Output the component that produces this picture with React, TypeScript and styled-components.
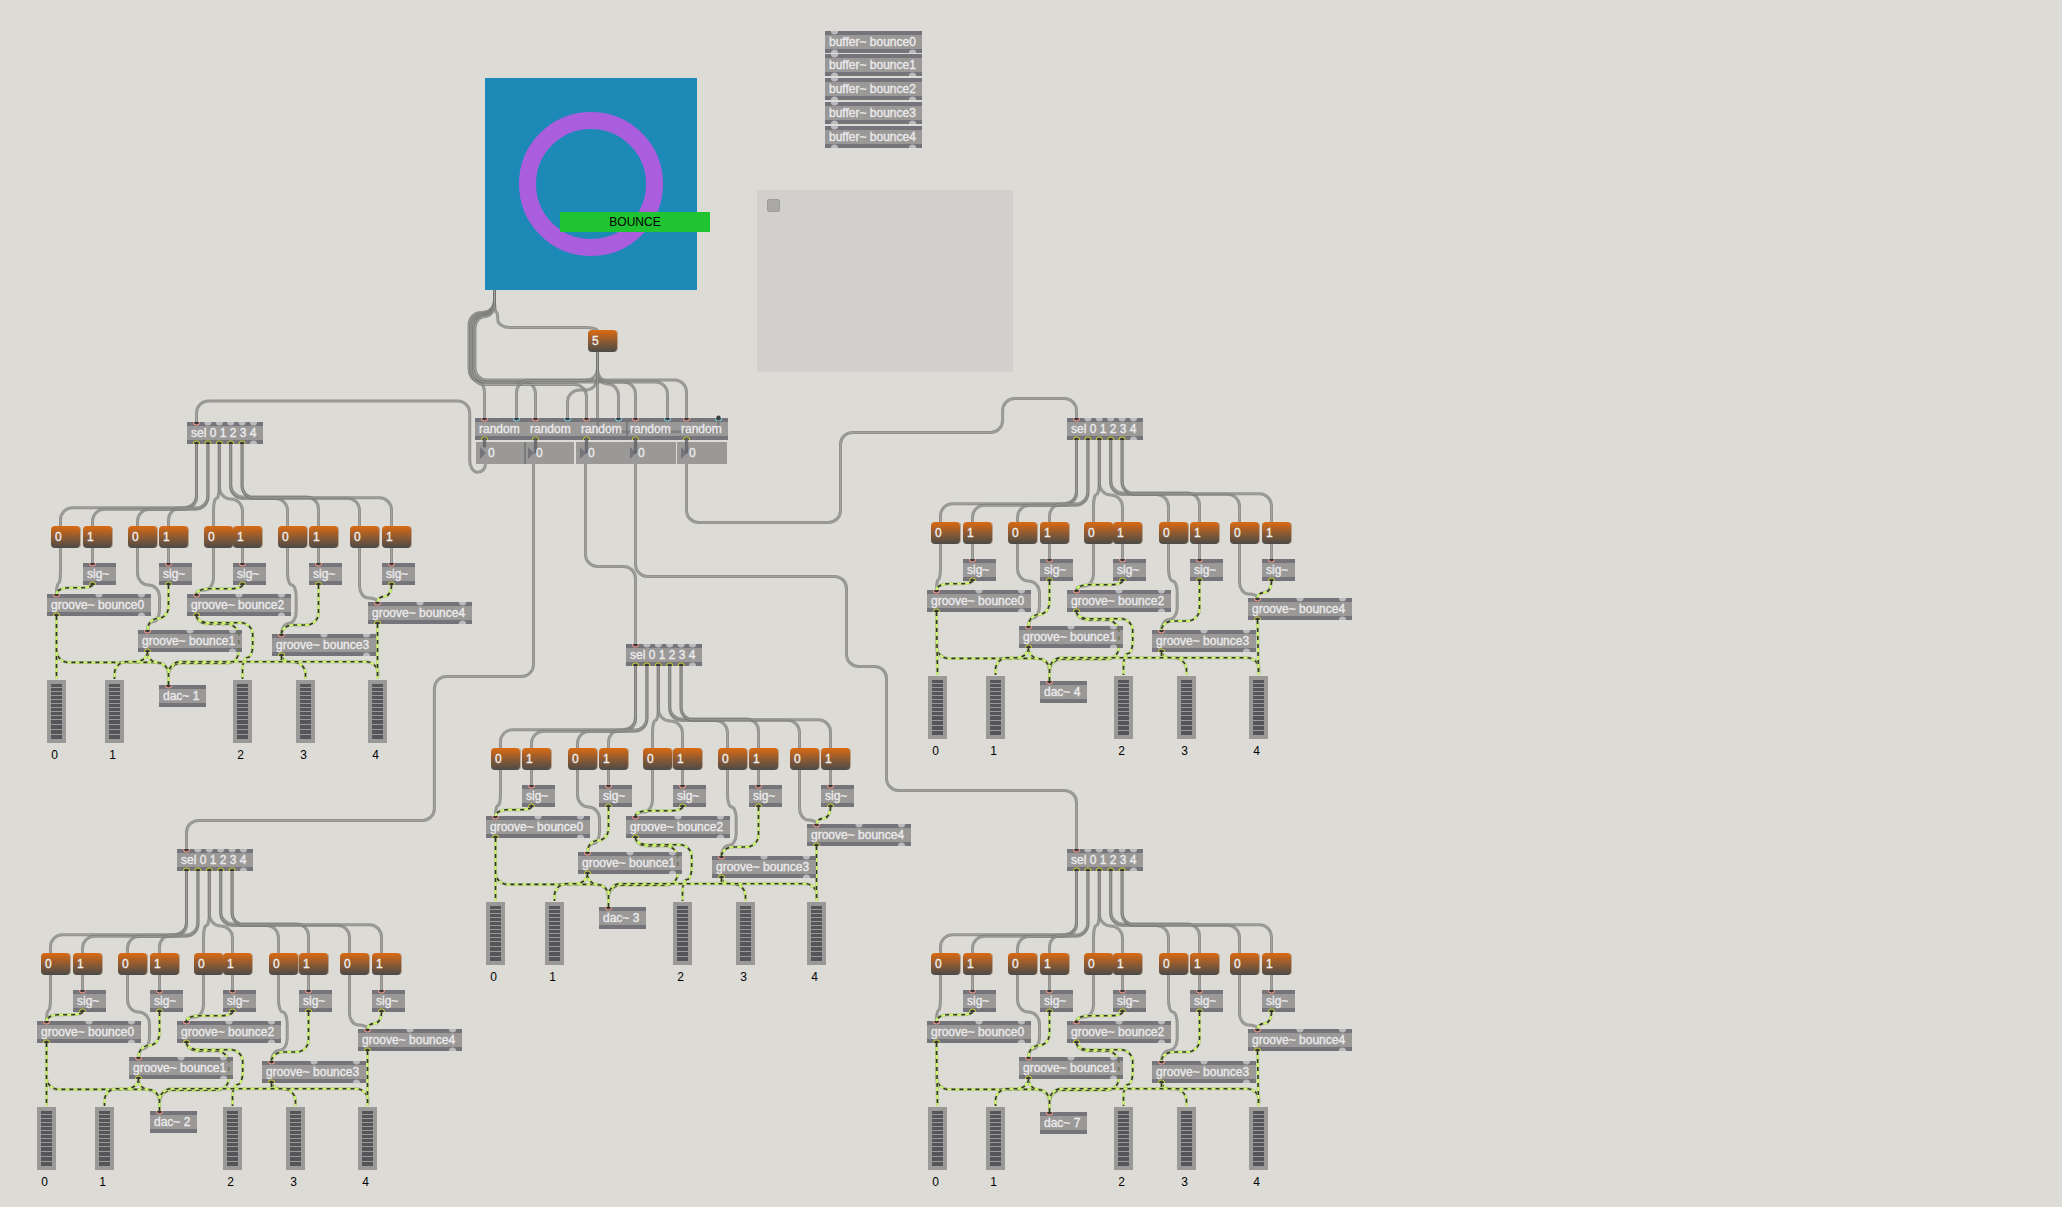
import React from "react";
import styled, { createGlobalStyle } from "styled-components";

const GlobalStyle = createGlobalStyle`
  html, body { margin: 0; padding: 0; background: #dcdbd6; }
  body { overflow: hidden; }
`;

const Patcher = styled.main`
  position: relative;
  isolation: isolate;
  width: 2062px;
  height: 1207px;
  overflow: hidden;
  background: #dcdbd6;
  font-family: "Liberation Sans", Arial, sans-serif;
  font-size: 12px;
  line-height: 22px;
  white-space: pre;
`;

const Cords = styled.svg<{ $over?: boolean }>`
  position: absolute;
  inset: 0;
  z-index: ${(p) => (p.$over ? 1 : "auto")};
  width: 2062px;
  height: 1207px;
  fill: none;
  pointer-events: none;
`;

/* A node's place on the free patcher canvas. */
const Node = styled.div<{ $x: number; $y: number }>`
  position: absolute;
  left: ${(p) => p.$x}px;
  top: ${(p) => p.$y}px;
`;

const Box = styled.div<{ $w: number }>`
  position: relative;
  width: ${(p) => p.$w}px;
  height: 22px;
  box-sizing: border-box;
  padding-left: 4px;
  color: #ebebee;
  background: linear-gradient(#74747a 4px, #9b9997 4px, #9b9997 18px, #74747a 18px);
`;

const Ports = styled.svg`
  position: absolute;
  left: 0;
  top: 0;
  width: 100%;
  height: 22px;
  overflow: hidden;
`;

const BoxText = styled.span`
  position: relative;
  z-index: 2;
  -webkit-text-stroke: 0.35px #ebebee;
`;

const BufferStack = styled.div`
  display: grid;
  grid-template-rows: 23px repeat(4, 24px);
`;

const RandomRow = styled.div`
  display: flex;
`;

const NumberRow = styled.div`
  display: grid;
  grid-template-columns: 48px 52px 50px 51px 50px;
`;

const Message = styled.div`
  width: 29px;
  height: 22px;
  box-sizing: border-box;
  padding-left: 4px;
  border-radius: 4px;
  color: #efefef;
  -webkit-text-stroke: 0.35px #efefef;
  background: linear-gradient(#dc6a12, #8f5a31 50%, #4b4b49);
  box-shadow: 1px 0 0 #b7a38f;
`;

const NumberBox = styled.div`
  position: relative;
  width: 50px;
  height: 22px;
  box-sizing: border-box;
  padding-left: 12px;
  color: #ebebee;
  background: #9b9997;
  &::before {
    content: "";
    position: absolute;
    left: 4px;
    top: 5px;
    border-left: 6px solid #74747a;
    border-top: 6px solid transparent;
    border-bottom: 6px solid transparent;
  }
`;

const Overlap = styled.div<{ $w: number; $h: number }>`
  width: ${(p) => p.$w}px;
  height: ${(p) => p.$h}px;
  background: #7c7b7c;
`;

const MeterColumn = styled.div`
  display: flex;
  flex-direction: column;
  gap: 1px;
`;

const Meter = styled.div`
  width: 19px;
  height: 63px;
  box-sizing: border-box;
  padding: 4px;
  display: flex;
  flex-direction: column;
  gap: 1px;
  background: #9b9997;
`;

const Led = styled.i<{ $h: number }>`
  flex: none;
  height: ${(p) => p.$h}px;
  background: #55565a;
`;

const Label = styled.span`
  padding-left: 4.3px;
  color: #000;
`;

const Panel = styled.div`
  width: 256px;
  height: 182px;
  box-sizing: border-box;
  padding: 9px;
  background: #d1d0cc;
`;

const Toggle = styled.div`
  width: 13px;
  height: 13px;
  box-sizing: border-box;
  border: 1px solid #9d9d9b;
  border-radius: 2px;
  background: #aaa9a7;
  margin-left: 0.5px;
`;

const Screen = styled.div`
  display: grid;
  place-items: center;
  width: 212px;
  height: 212px;
  background: #1d89b7;
`;

const Ring = styled.div`
  width: 144.6px;
  height: 144.6px;
  box-sizing: border-box;
  border: 17.6px solid #aa5edd;
  border-radius: 50%;
`;

const Banner = styled.div`
  width: 150px;
  height: 20px;
  line-height: 20px;
  text-align: center;
  color: #000;
  background: #20c431;
`;

type Pt = [number, number];

function route(points: Pt[], radius = 12) {
  let d = `M${points[0][0]} ${points[0][1]}`;
  for (let i = 1; i < points.length - 1; i++) {
    const [a, b, c] = [points[i - 1], points[i], points[i + 1]];
    const l1 = Math.hypot(b[0] - a[0], b[1] - a[1]);
    const l2 = Math.hypot(c[0] - b[0], c[1] - b[1]);
    if (!l1 || !l2) continue;
    const r1 = Math.min(radius, i === 1 ? l1 : l1 / 2);
    const r2 = Math.min(radius, i === points.length - 2 ? l2 : l2 / 2);
    const p = [b[0] + ((a[0] - b[0]) * r1) / l1, b[1] + ((a[1] - b[1]) * r1) / l1];
    const q = [b[0] + ((c[0] - b[0]) * r2) / l2, b[1] + ((c[1] - b[1]) * r2) / l2];
    const k = 0.55;
    d += `L${p[0]} ${p[1]}C${p[0] + (b[0] - p[0]) * k} ${p[1] + (b[1] - p[1]) * k} ${q[0] + (b[0] - q[0]) * k} ${q[1] + (b[1] - q[1]) * k} ${q[0]} ${q[1]}`;
  }
  const e = points[points.length - 1];
  return d + `L${e[0]} ${e[1]}`;
}

/* Path through alternating coordinates: y, x, y, x ... starting at (x0, y0). */
function steps(x0: number, y0: number, ...rest: number[]): Pt[] {
  const pts: Pt[] = [[x0, y0]];
  let x = x0;
  let y = y0;
  rest.forEach((v, i) => {
    if (i % 2 === 0) y = v;
    else x = v;
    pts.push([x, y]);
  });
  return pts;
}

const Cord = ({ pts, r }: { pts: Pt[]; r?: number }) => {
  const d = route(pts, r);
  return (
    <g>
      <path d={d} stroke="#737371" strokeOpacity={0.7} strokeWidth={3} />
      <path d={d} stroke="#a6a6a3" strokeOpacity={0.8} strokeWidth={1} />
    </g>
  );
};

const Signal = ({ pts, r }: { pts: Pt[]; r?: number }) => {
  const d = route(pts, r);
  return (
    <g>
      <path d={d} stroke="#a3a896" strokeOpacity={0.75} strokeWidth={3} />
      <path d={d} stroke="#cffa6a" strokeWidth={2} />
      <path d={d} stroke="#34342f" strokeWidth={1.6} strokeDasharray="4 4" />
    </g>
  );
};

type Port = { at: number; kind?: "hot" | "cold" | "out" };
const ringColor = { hot: "#ec9384", cold: "#78cbd8", out: "#c2c932" };

const PortDots = ({ ins = [], outs = [] }: { ins?: Port[]; outs?: Port[] }) => {
  const dot = (p: Port, y: number) =>
    p.kind ? (
      <g key={`${y}-${p.at}`}>
        <circle cx={p.at} cy={y} r={3} fill="#66666a" stroke={ringColor[p.kind]} strokeWidth={1.1} />
        <circle cx={p.at} cy={y} r={2.3} fill="#38383a" />
      </g>
    ) : (
      <circle key={`${y}-${p.at}`} cx={p.at} cy={y} r={3.6} fill="#bbbbbf" />
    );
  return (
    <Ports>
      {ins.map((p) => dot(p, 0))}
      {outs.map((p) => dot(p, 22))}
    </Ports>
  );
};

const Obj = ({ w, text, ins, outs }: { w: number; text: string; ins?: Port[]; outs?: Port[] }) => (
  <Box $w={w}>
    <PortDots ins={ins} outs={outs} />
    <BoxText>{text}</BoxText>
  </Box>
);

type Voice = {
  y: number;
  sel: number;
  msgs: number[];
  sigs: number[];
  grooves: number[];
  dac: number;
  dacY: number;
  dacText: string;
  meters: number[];
};

const voices: Voice[] = [
  { y: 422, sel: 187, msgs: [51, 83, 128, 159, 204, 233, 278, 309, 350, 382], sigs: [83, 159, 233, 309, 382], grooves: [47, 138, 187, 272, 368], dac: 159, dacY: 263, dacText: "dac~ 1", meters: [47, 105, 233, 296, 368] },
  { y: 849, sel: 177, msgs: [41, 73, 118, 150, 194, 223, 269, 299, 340, 372], sigs: [73, 150, 223, 299, 372], grooves: [37, 129, 177, 262, 358], dac: 150, dacY: 262, dacText: "dac~ 2", meters: [37, 95, 223, 286, 358] },
  { y: 644, sel: 626, msgs: [491, 522, 568, 599, 643, 673, 718, 749, 790, 821], sigs: [522, 599, 673, 749, 821], grooves: [486, 578, 626, 712, 807], dac: 599, dacY: 263, dacText: "dac~ 3", meters: [486, 545, 673, 736, 807] },
  { y: 418, sel: 1067, msgs: [931, 963, 1008, 1040, 1084, 1113, 1159, 1190, 1230, 1262], sigs: [963, 1040, 1113, 1190, 1262], grooves: [927, 1019, 1067, 1152, 1248], dac: 1040, dacY: 263, dacText: "dac~ 4", meters: [928, 986, 1114, 1177, 1249] },
  { y: 849, sel: 1067, msgs: [931, 963, 1008, 1040, 1084, 1113, 1159, 1190, 1230, 1262], sigs: [963, 1040, 1113, 1190, 1262], grooves: [927, 1019, 1067, 1152, 1248], dac: 1040, dacY: 263, dacText: "dac~ 7", meters: [928, 986, 1114, 1177, 1249] },
];

const P = 9.5;
const selPorts = [0, 1, 2, 3, 4, 5].map((i) => P + i * 11.4);
const grooveY = [172, 208, 172, 212, 180];
const selLevels = [85.7, 87.2, 87.2, 86, 76.5, 77, 76.5, 74.9, 76.2, 75.8];
const ledHeights = [3, 3, 3, 3, 3, 3, 3, 3, 3, 4, 4, 4, 4];

const VoiceCords = ({ v }: { v: Voice }) => {
  const { y } = v;
  const m = v.msgs.map((x) => x + P);
  const s = v.sigs.map((x) => x + P);
  const g = v.grooves.map((x) => x + P);
  const t = v.meters.map((x) => x + P);
  const dac = v.dac + P;
  const dacTop = y + v.dacY;
  return (
    <g>
      {m.map((x, i) => (
        <Cord key={i} pts={steps(v.sel + selPorts[i >> 1], y + 21, y + selLevels[i], x, y + 105)} />
      ))}
      {s.map((x, i) => (
        <Cord key={i} pts={[[m[i * 2 + 1], y + 126], [x, y + 141]]} />
      ))}
      <Cord pts={steps(m[0], y + 126, y + 161.5, g[0], y + 172)} />
      <Cord pts={steps(m[2], y + 126, y + 163, m[2] + 22, y + 199.5, g[1], y + 208)} />
      <Cord pts={steps(m[4], y + 126, y + 168, g[2], y + 172)} />
      <Cord pts={steps(m[6], y + 126, y + 163, m[6] + 8.7, y + 201.5, g[3], y + 212)} />
      <Cord pts={steps(m[8], y + 126, y + 176, g[4], y + 180)} />

      <Signal pts={steps(s[0], y + 163, y + 165.7, g[0], y + 172)} />
      <Signal pts={steps(s[1], y + 163, y + 196.5, g[1], y + 208)} />
      <Signal pts={steps(s[2], y + 163, y + 166.7, g[2], y + 172)} />
      <Signal pts={steps(s[3], y + 163, y + 203, g[3], y + 212)} />
      <Signal pts={steps(s[4], y + 163, y + 174.5, g[4], y + 180)} />

      <Signal pts={steps(g[0], y + 194, y + 240.4, dac, dacTop)} />
      <Signal pts={[[g[0], y + 194], [t[0], y + 257]]} />
      <Signal pts={steps(g[1], y + 230, y + 240.7, dac, dacTop)} />
      <Signal pts={steps(g[1], y + 230, y + 239.7, t[1], y + 257)} />
      <Signal pts={steps(g[2], y + 194, y + 202, g[2] + 42.3, y + 241.3, dac, dacTop)} />
      <Signal pts={steps(g[2], y + 194, y + 200.7, g[2] + 56.2, y + 235.5, t[2], y + 257)} />
      <Signal pts={steps(g[3], y + 234, y + 240, t[3], y + 257)} />
      <Signal pts={[[g[3], y + 234], [g[3], y + 239]]} />
      <Signal pts={steps(dac, dacTop, y + 239.7, t[4] + 0.6, y + 255)} />
      <Signal pts={[[g[4], y + 202], [t[4], y + 257]]} />
    </g>
  );
};

const VoiceNodes = ({ v }: { v: Voice }) => {
  const { y } = v;
  return (
    <>
      <Node $x={v.sel} $y={y}>
        <Obj
          w={76}
          text="sel 0 1 2 3 4"
          ins={selPorts.map((at, i) => ({ at, kind: i === 0 ? "hot" : undefined }))}
          outs={selPorts.map((at, i) => ({ at, kind: i < 5 ? "out" : undefined }))}
        />
      </Node>
      {v.msgs.map((x, i) => (
        <Node key={i} $x={x} $y={y + 104}>
          <Message>{i % 2}</Message>
        </Node>
      ))}
      {v.sigs.map((x, i) => (
        <Node key={i} $x={x} $y={y + 141}>
          <Obj w={33} text="sig~" ins={[{ at: P, kind: "hot" }]} outs={[{ at: P, kind: "out" }]} />
        </Node>
      ))}
      {v.grooves.map((x, i) => (
        <Node key={i} $x={x} $y={y + grooveY[i]}>
          <Obj
            w={104}
            text={`groove~ bounce${i}`}
            ins={[{ at: P, kind: "hot" }, { at: 52 }, { at: 94.5 }]}
            outs={[{ at: P, kind: "out" }, { at: 94.5 }]}
          />
        </Node>
      ))}
      <Node $x={v.dac} $y={y + v.dacY}>
        <Obj w={47} text={v.dacText} ins={[{ at: P, kind: "hot" }]} />
      </Node>
      {v.meters.map((x, i) => (
        <Node key={i} $x={x} $y={y + 258}>
          <MeterColumn>
            <Meter>
              {ledHeights.map((h, k) => (
                <Led key={k} $h={h} />
              ))}
            </Meter>
            <Label>{i}</Label>
          </MeterColumn>
        </Node>
      ))}
    </>
  );
};

const randoms = [475, 526, 577, 626, 677];
const randomWidths = [51, 51, 49, 51, 51];

const RoutingCords = () => (
  <g>
    <Cord pts={steps(494.5, 290, 312, 497.8, 327.5, 597.5, 331)} />
    <Cord pts={steps(494.5, 290, 312.5, 469, 380.5, 484.5, 418)} />
    <Cord pts={steps(494.5, 290, 313.5, 470.5, 381.5, 535.5, 418)} />
    <Cord pts={steps(494.5, 290, 314.5, 472, 384.5, 586.5, 418)} />
    <Cord pts={steps(494.5, 290, 315.5, 473.5, 382, 635.5, 418)} />
    <Cord pts={steps(494.5, 290, 316.5, 475, 380, 686.5, 418)} />
    <Cord pts={steps(597.5, 352, 380.5, 516.5, 418)} />
    <Cord pts={steps(597.5, 352, 390, 567.5, 418)} />
    <Cord pts={steps(597.5, 352, 384, 618.5, 418)} />
    <Cord pts={steps(597.5, 352, 382, 667.5, 418)} />
    <Cord pts={[[597.5, 352], [597.5, 418]]} />
    <Cord pts={steps(485.5, 464, 472.3, 469.7, 401, 196.5, 422)} />
    <Cord pts={steps(533.5, 464, 676.5, 434.4, 820.4, 186.5, 849)} />
    <Cord pts={steps(585.5, 464, 566.4, 635.5, 644)} />
    <Cord pts={steps(635.5, 464, 576.4, 846.5, 666.4, 886.5, 790.4, 1076.5, 849)} />
    <Cord pts={steps(686.5, 464, 522.4, 840.5, 432.4, 1002.6, 398.6, 1076.5, 418)} />
  </g>
);

export default function App() {
  return (
    <>
      <GlobalStyle />
      <Patcher>
        <Cords>
          <RoutingCords />
          {voices.map((v, i) => (
            <VoiceCords key={i} v={v} />
          ))}
        </Cords>

        <Node $x={825} $y={31}>
          <BufferStack>
            {[0, 1, 2, 3, 4].map((i) => (
              <Obj key={i} w={97} text={`buffer~ bounce${i}`} ins={[{ at: P }]} outs={[{ at: P }, { at: 87.5 }]} />
            ))}
          </BufferStack>
        </Node>

        <Node $x={757} $y={190}>
          <Panel>
            <Toggle />
          </Panel>
        </Node>

        <Node $x={485} $y={78}>
          <Screen>
            <Ring />
          </Screen>
        </Node>
        <Node $x={560} $y={212}>
          <Banner>BOUNCE</Banner>
        </Node>

        <Node $x={588} $y={330}>
          <Message>5</Message>
        </Node>

        <Node $x={475} $y={418}>
          <RandomRow>
            {randomWidths.map((w, i) => (
              <Obj
                key={i}
                w={w}
                text="random"
                ins={[{ at: P, kind: "hot" }, { at: 41.5, kind: "cold" }]}
                outs={[{ at: P, kind: "out" }]}
              />
            ))}
          </RandomRow>
        </Node>
        <Node $x={476} $y={442}>
          <NumberRow>
            {randoms.map((x) => (
              <NumberBox key={x}>
                <BoxText>0</BoxText>
              </NumberBox>
            ))}
          </NumberRow>
        </Node>
        <Node $x={524} $y={442}>
          <Overlap $w={2} $h={22} />
        </Node>
        <Node $x={626} $y={422}>
          <Overlap $w={2} $h={14} />
        </Node>

        {voices.map((v, i) => (
          <VoiceNodes key={i} v={v} />
        ))}

        <Cords $over>
          <path
            d="M597.5 418V421C597.5 427 600 431.7 606 431.7H714Q718.5 431.7 718.5 427V418"
            stroke="#77777a"
            strokeOpacity={0.75}
            strokeWidth={2.4}
          />
          <circle cx={718.5} cy={417.8} r={2.2} fill="#3f3f42" />
          {randoms.map((x, i) => (
            <path key={x} d={`M${x + P} 439V${i === 0 ? 446 : 452}`} stroke="#636367" strokeOpacity={0.85} strokeWidth={3.4} strokeLinecap="round" />
          ))}
          {voices.map((v, i) => (
            <path
              key={i}
              d={`M${v.grooves[2] + P + 42.3} ${v.y + 210}v19`}
              stroke="#6b734f"
              strokeOpacity={0.75}
              strokeWidth={2}
              strokeDasharray="4 4"
            />
          ))}
        </Cords>
      </Patcher>
    </>
  );
}
